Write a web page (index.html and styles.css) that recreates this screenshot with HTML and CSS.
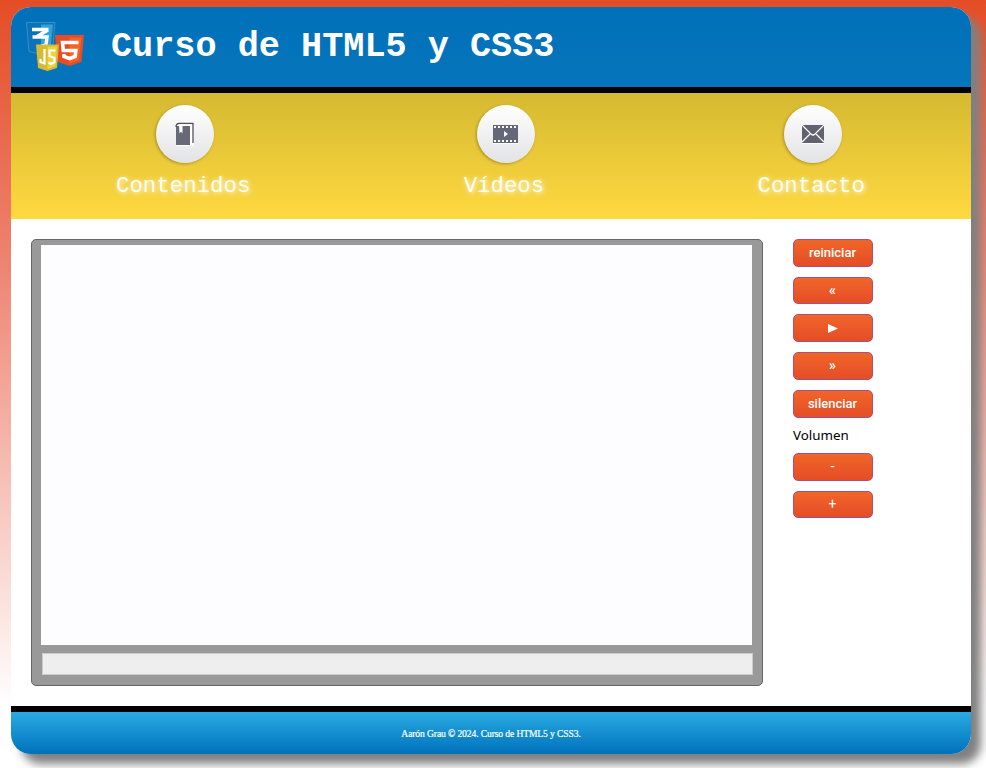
FILE: index.html
```html
<!DOCTYPE html>
<html lang="es">
<head>
<meta charset="utf-8">
<title>Curso de HTML5 y CSS3</title>
<link rel="stylesheet" href="styles.css">
</head>
<body>
<div class="page">
  <header class="header">
    <svg class="logo" width="58" height="50" viewBox="0 0 58 50">
      <path d="M.5 .5H29L26.500 28L14.500 32L3 29.500Z" fill="#0c73b8" stroke="#4a9bd0" stroke-width=".7"/>
      <path d="M15 2.500H27L24.500 27L15 29.500Z" fill="#2fa4dc"/>
      <path d="M6 7.500H22.500M22 8L11 14.500M6.500 15H21L20 23L15 24.500" fill="none" stroke="#fff" stroke-width="3.400"/>
      <path d="M29 13H58L55.500 40L43.500 44L31.500 40Z" fill="#e44d26"/>
      <path d="M43.500 15.500H55.500L53 38L43.500 41.500Z" fill="#f16529"/>
      <path d="M52.500 20.500H36.500L37.300 28.500H49.800L49.200 34.500L43.500 36.500L38 34.500L37.800 32" fill="none" stroke="#fff" stroke-width="3.600"/>
      <path d="M10 22.500H33L31 46L21.500 49L12 46Z" fill="#d6ba32"/>
      <path d="M21.500 24.500H31L29.300 44.500L21.500 47Z" fill="#ebd442"/>
      <path d="M18.500 27V41.500L14.500 40V37M29.500 28.500H23.500V34L28.500 36V40L25 42L22.500 40.500" fill="none" stroke="#fff" stroke-width="2.200"/>
    </svg>
    <h1 class="title">Curso de HTML5 y CSS3</h1>
  </header>
  <nav class="nav">
    <a class="item contents">
      <span class="disc"><svg width="20" height="24" viewBox="0 0 20 24"><path d="M1 4L4 1H19V24H1Z" fill="#fff"/><path d="M1 4H15V23H1Z" fill="#666a78"/><path d="M1 5Q1 1.500 4 1.500H18V21" fill="none" stroke="#50515f" stroke-width="1.300"/><path d="M4 3.200H16V23" fill="none" stroke="#fff" stroke-width="1.800"/><path d="M4 3H7.500V11.500L6 9.500L4.500 11.500Z" fill="#fff"/></svg></span>
      <span class="label">Contenidos</span>
    </a>
    <a class="item videos">
      <span class="disc"><svg width="26" height="20" viewBox="0 0 26 20"><path d="M0 1H25V19H0Z" fill="#646775"/><path d="M1 3H25M1 17H25" stroke="#fff" stroke-width="2" stroke-dasharray="2 2"/><path d="M0 19.500H25" stroke="#fff"/><path d="M11 7L15 10L11 13Z" fill="#fff"/></svg></span>
      <span class="label">Vídeos</span>
    </a>
    <a class="item contact">
      <span class="disc"><svg width="24" height="20" viewBox="0 0 24 20"><path d="M1 1H23V19H1Z" fill="#60636f"/><path d="M1 1L10 10Q12 12 14 10L23 1M1 18L9 10M23 18L15 10M1 19.500H23" fill="none" stroke="#fff" stroke-width="1.200"/></svg></span>
      <span class="label">Contacto</span>
    </a>
  </nav>
  <main class="main">
    <section class="player">
      <div class="screen"></div>
      <div class="progress"></div>
    </section>
    <aside class="controls">
      <button>reiniciar</button>
      <button class="seek">«</button>
      <button><svg class="play" width="10" height="9" viewBox="0 0 10 9"><path d="M0 0L10 4.500L0 9Z" fill="#fff"/></svg></button>
      <button class="seek">»</button>
      <button>silenciar</button>
      <span class="volume">Volumen</span>
      <button class="level">-</button>
      <button class="level">+</button>
    </aside>
  </main>
  <footer class="footer">Aarón Grau © 2024. Curso de HTML5 y CSS3.</footer>
</div>
</body>
</html>
```
FILE: styles.css
```css
* { box-sizing: border-box; }
html { height: 100%; overflow: hidden; }
body {
  margin: 0;
  height: 768px;
  padding: 7px 15px 14px 11px;
  background: #fff linear-gradient(#e44d26, #ee8573 35%, #fff 92%);
}
.page {
  height: 747px;
  display: flex;
  flex-direction: column;
  overflow: hidden;
  background: #fff;
  border-radius: 20px;
  box-shadow: 10px 10px 10px #808080;
}
.header {
  height: 86px;
  flex: none;
  display: flex;
  align-items: flex-start;
  padding: 15px 15px 0;
  background: linear-gradient(#0070ba, #0675bb);
  border-bottom: 6px solid #000;
}
.logo { overflow: visible; }
.title {
  margin: 5px 0 0 27px;
  font: bold 35.2px/40px "Courier New", "Liberation Mono", monospace;
  color: #fff;
}
.nav {
  height: 126px;
  flex: none;
  display: flex;
  padding: 12px 106px 0 105px;
  justify-content: space-between;
  background: linear-gradient(#d5b931, #ffd940);
}
.item { display: flex; flex-direction: column; align-items: center; }
.disc {
  width: 58px;
  height: 58px;
  display: flex;
  align-items: center;
  justify-content: center;
  border-radius: 50%;
  background: linear-gradient(#fff, #e2e3e6);
  box-shadow: -1px 1px 3px rgba(80, 60, 0, .4);
}
.contents .disc { margin-left: 4px; }
.videos .disc { margin-left: 5px; }
.contact .disc { margin-left: 3px; }
.label {
  margin-top: 10px;
  font: 22.4px/26px "Courier New", "Liberation Mono", monospace;
  color: #fffdf0;
  text-shadow: 1px 1px 5px #fff;
}
.main {
  height: 487px;
  flex: none;
  display: flex;
  align-items: flex-start;
  gap: 30px;
  padding: 20px;
}
.player {
  width: 732px;
  height: 447px;
  padding: 5px 10px 0 9px;
  border: 1px solid #666;
  border-radius: 5px;
  background: #999;
}
.screen { width: 711px; height: 400px; background: #fdfdff; }
.progress {
  width: 711px;
  height: 22px;
  margin: 8px 0 0 1px;
  border: 1px solid #ccc;
  background: #eee;
}
.controls {
  width: 80px;
  display: flex;
  flex-direction: column;
  gap: 9.900px;
}
button {
  width: 80px;
  height: 27.800px;
  padding: 0 1px 0 0;
  display: flex;
  align-items: center;
  justify-content: center;
  border: 1px solid #aa4f80;
  border-radius: 5px;
  background: linear-gradient(#f16529, #e44d26);
  color: #fff;
  font: 500 13px/15px Roboto, sans-serif;
}
.seek { font-size: 15px; }
.level { font-weight: 400; font-size: 14px; }
.volume {
  height: 15.600px;
  font: 13.333px/16px "Noto Sans", sans-serif;
  color: #000;
}
.footer {
  height: 48px;
  flex: none;
  border-top: 6px solid #000;
  background: linear-gradient(#29abe2, #0071bc);
  color: #fff;
  text-align: center;
  letter-spacing: -.12px;
  font: 9.600px/44px "Liberation Serif", serif;
  -webkit-text-stroke: .2px #fff;
}
```
